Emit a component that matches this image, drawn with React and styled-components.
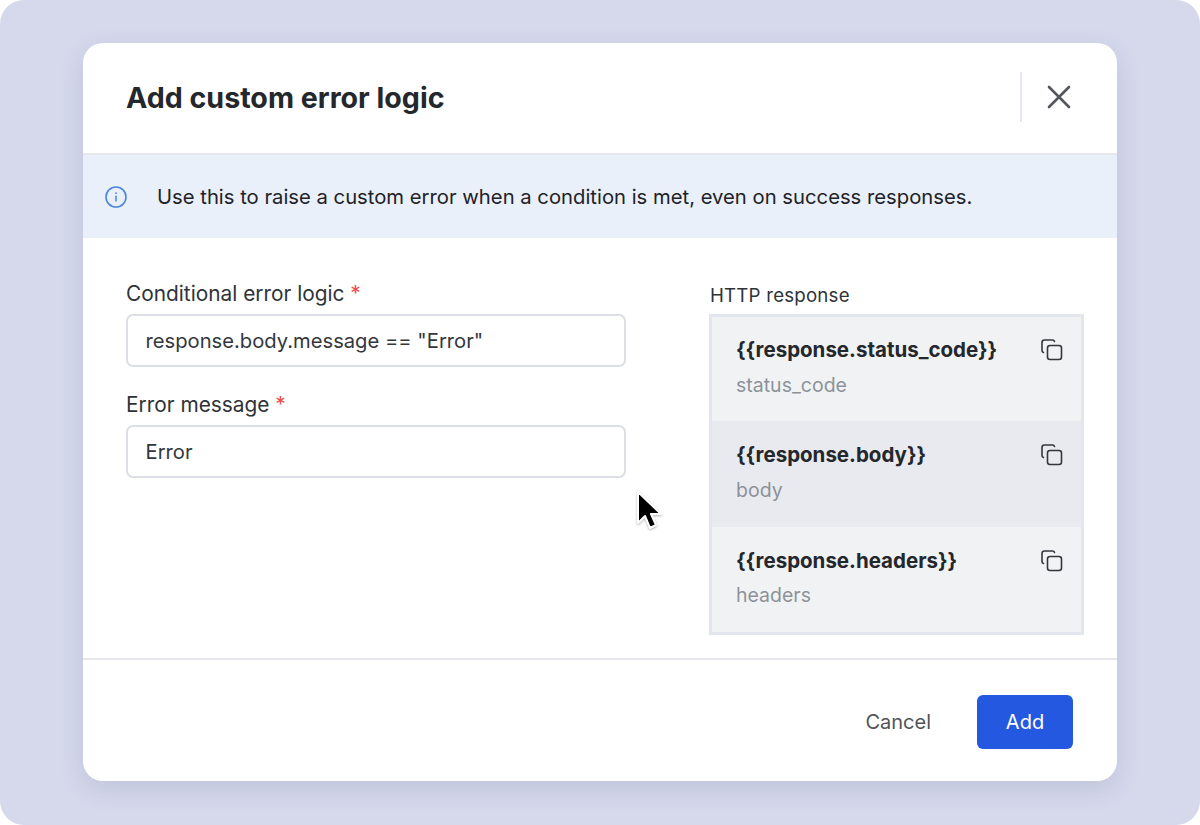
import React from 'react';
import styled, { createGlobalStyle } from 'styled-components';

const GlobalStyle = createGlobalStyle`
  html, body {
    margin: 0;
    padding: 0;
    background: #fff;
  }
  * {
    box-sizing: border-box;
  }
`;

const Frame = styled.div`
  position: relative;
  width: 1200px;
  height: 825px;
  padding: 43px 83px 44px;
  background: #d6d9ec;
  border-radius: 24px;
  font-family: Inter, 'Noto Sans', sans-serif;
  overflow: hidden;
`;

const Modal = styled.div`
  width: 1034px;
  height: 738px;
  display: flex;
  flex-direction: column;
  background: #fff;
  border-radius: 20px;
  box-shadow: 0 8px 24px rgba(60, 66, 110, 0.14);
  overflow: hidden;
`;

const Header = styled.header`
  height: 112px;
  flex: none;
  display: flex;
  align-items: center;
  justify-content: space-between;
  padding: 0 46px 2px 43px;
  border-bottom: 2px solid #e5e7ec;
`;

const Title = styled.h1`
  margin: 0;
  font-size: 28.6px;
  font-weight: 700;
  color: #24272c;
`;

const CloseArea = styled.div`
  height: 50px;
  display: flex;
  align-items: center;
  padding-left: 25px;
  border-left: 2px solid #e5e7ec;
`;

const CloseIcon = styled.svg`
  display: block;
  width: 24px;
  height: 24px;
  color: #53575d;
`;

const Banner = styled.div`
  height: 83px;
  flex: none;
  display: flex;
  align-items: center;
  gap: 30px;
  padding: 0 22px;
  background: #e9f0f9;
  font-size: 20.25px;
  color: #1f2227;
`;

const InfoIcon = styled.svg`
  flex: none;
  width: 22px;
  height: 22px;
  color: #4a86dc;
`;

const Body = styled.div`
  height: 422px;
  flex: none;
  display: flex;
  justify-content: space-between;
  padding: 44px 33px 0 43px;
  border-bottom: 2px solid #e5e7ec;
`;

const Form = styled.div`
  width: 500px;
  display: flex;
  flex-direction: column;
  gap: 26px;
`;

const Field = styled.div`
  display: flex;
  flex-direction: column;
  gap: 8px;
`;

const Label = styled.label`
  font-size: 20.85px;
  line-height: 24px;
  color: #2f3338;
`;

const Required = styled.span`
  color: #ef4c4c;
`;

const Input = styled.div`
  height: 53px;
  display: flex;
  align-items: center;
  padding: 0 17.5px;
  border: 2px solid #dcdfe5;
  border-radius: 7px;
  font-size: 20.2px;
  color: #33373c;
`;

const ResponseColumn = styled.div`
  width: 375px;
  display: flex;
  flex-direction: column;
  gap: 7px;
  padding-top: 3px;
`;

const ResponseLabel = styled.div`
  padding-left: 1px;
  font-size: 18.7px;
  line-height: 22px;
  letter-spacing: 0.2px;
  color: #2f3338;
`;

const ResponseList = styled.div`
  height: 321px;
  display: flex;
  flex-direction: column;
  border: 3px solid #e3e6ed;
  background: #f1f2f4;
`;

const ResponseItem = styled.div`
  height: ${props => props.$height}px;
  flex: none;
  display: flex;
  justify-content: space-between;
  padding: ${props => props.$top}px 17px 0 24px;
  background: ${props => (props.$active ? '#e9eaef' : 'transparent')};
`;

const ItemText = styled.div`
  display: flex;
  flex-direction: column;
  gap: ${props => props.$gap}px;
`;

const ItemName = styled.div`
  font-size: 20.5px;
  line-height: 24px;
  font-weight: 700;
  color: #24272c;
`;

const ItemKey = styled.div`
  font-size: 19.5px;
  line-height: 24px;
  color: #8d9299;
`;

const CopyIcon = styled.svg`
  flex: none;
  width: 24px;
  height: 24px;
  color: #33373c;
`;

const Footer = styled.footer`
  flex: 1;
  display: flex;
  align-items: center;
  justify-content: flex-end;
  gap: 46px;
  padding: 3px 44px 0 0;
`;

const CancelButton = styled.button`
  padding: 0;
  border: none;
  background: none;
  font-family: inherit;
  font-size: 20px;
  color: #505459;
`;

const AddButton = styled.button`
  width: 96px;
  height: 54px;
  border: none;
  border-radius: 6px;
  background: #2558e0;
  font-family: inherit;
  font-size: 20px;
  color: #fff;
`;

const Cursor = styled.svg`
  position: absolute;
  left: 634px;
  top: 490px;
  width: 28px;
  height: 42px;
  filter: drop-shadow(0 1px 1px rgba(0, 0, 0, 0.3));
`;

const items = [
  { name: '{{response.status_code}}', key: 'status_code', height: 104, top: 21, gap: 11 },
  { name: '{{response.body}}', key: 'body', height: 106, top: 22, gap: 11, active: true },
  { name: '{{response.headers}}', key: 'headers', height: 105, top: 22, gap: 10 },
];

const CopyGlyph = () => (
  <CopyIcon viewBox="0 0 24 24" fill="none" stroke="currentColor" strokeWidth="1.6" strokeLinecap="round" strokeLinejoin="round">
    <rect x="7.5" y="7.5" width="14" height="14" rx="2.5" />
    <path d="M3.5 14.5 A2 2 0 0 1 2 12.5 V4.5 A2.5 2.5 0 0 1 4.5 2 H12.5 A2 2 0 0 1 14.5 3.5" />
  </CopyIcon>
);

export default function App() {
  return (
    <>
      <GlobalStyle />
      <Frame>
        <Modal>
          <Header>
            <Title>Add custom error logic</Title>
            <CloseArea>
              <CloseIcon viewBox="0 0 24 24" fill="none" stroke="currentColor" strokeWidth="2.6" strokeLinecap="round">
                <path d="M2 2 L22 22 M22 2 L2 22" />
              </CloseIcon>
            </CloseArea>
          </Header>

          <Banner>
            <InfoIcon viewBox="0 0 22 22" fill="none" stroke="currentColor">
              <circle cx="11" cy="11" r="10" strokeWidth="1.6" />
              <path d="M11 10.2 V15" strokeWidth="1.5" strokeLinecap="round" />
              <circle cx="11" cy="7.2" r="0.9" fill="currentColor" stroke="none" />
            </InfoIcon>
            Use this to raise a custom error when a condition is met, even on success responses.
          </Banner>

          <Body>
            <Form>
              <Field>
                <Label>Conditional error logic <Required>*</Required></Label>
                <Input>response.body.message == "Error"</Input>
              </Field>
              <Field>
                <Label>Error message <Required>*</Required></Label>
                <Input>Error</Input>
              </Field>
            </Form>

            <ResponseColumn>
              <ResponseLabel>HTTP response</ResponseLabel>
              <ResponseList>
                {items.map(item => (
                  <ResponseItem key={item.key} $height={item.height} $top={item.top} $active={item.active}>
                    <ItemText $gap={item.gap}>
                      <ItemName>{item.name}</ItemName>
                      <ItemKey>{item.key}</ItemKey>
                    </ItemText>
                    <CopyGlyph />
                  </ResponseItem>
                ))}
              </ResponseList>
            </ResponseColumn>
          </Body>

          <Footer>
            <CancelButton>Cancel</CancelButton>
            <AddButton>Add</AddButton>
          </Footer>
        </Modal>

        <Cursor viewBox="0 0 28 42">
          <path d="M4 2 L4 33 L11 26 L16 38 L22 35 L17 24 L27 24 Z" fill="#000" stroke="#fff" strokeWidth="2" strokeLinejoin="round" />
        </Cursor>
      </Frame>
    </>
  );
}
